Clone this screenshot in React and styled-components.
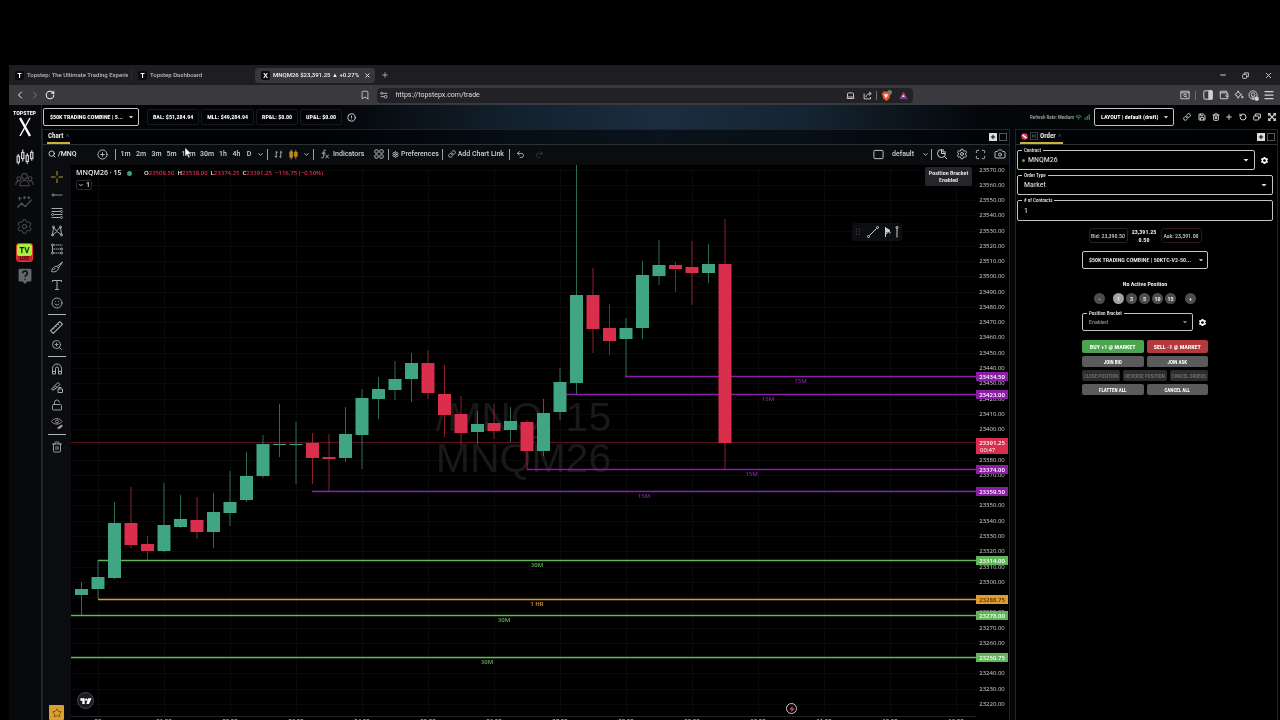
import React from 'react';
import styled, { createGlobalStyle } from 'styled-components';
import {
  Bookmark, Camera, ChevronDown, ChevronLeft, ChevronRight, CirclePlus,
  CircleAlert, Laptop, Link, LockOpen, Maximize,
  Menu, Minus, Plus, Redo2, RotateCcw, RotateCw, Save, Search, Settings,
  Smile, Star, Trash2, Undo2, Wallet, X, Zap, ZoomIn,
} from 'lucide-react';
import { MdSettings, MdWifi, MdSignalCellularAlt, MdArrowDropDown } from 'react-icons/md';

const UI = '"Open Sans", "Noto Sans", sans-serif';
const CHROME = 'Roboto, "Open Sans", sans-serif';
const NARROW = '"Roboto Condensed", "Liberation Sans Narrow", Roboto, sans-serif';

const GlobalStyle = createGlobalStyle`
  * { box-sizing: border-box; }
  html, body { margin: 0; background: #000; }
  body { overflow: hidden; color: #e8e8e8; font: 600 7px/10px ${UI}; }
  button, select, input {
    font: inherit;
    color: inherit;
    margin: 0;
    padding: 0;
    border: 0;
    background: none;
  }
  svg { display: block; flex: none; }
  a { color: inherit; text-decoration: none; }
`;

const Page = styled.div`
  height: 100vh;
  padding: 65px 0 0 9px;
  display: flex;
  flex-direction: column;
  will-change: transform;
`;

const TabStrip = styled.div`
  flex: none;
  height: 20px;
  display: flex;
  align-items: center;
  background: #1e1d21;
`;

const BrowserTab = styled.button`
  width: ${p => p.$w}px;
  height: 15px;
  padding: 0 3px 0 6px;
  display: flex;
  align-items: center;
  gap: 3px;
  text-align: left;
  white-space: nowrap;
  font: 500 6px/10px ${CHROME};
  color: ${p => (p.$active ? '#f2f2f2' : '#b9b9bc')};
  background: ${p => (p.$active ? '#38373b' : 'transparent')};
  border-radius: 4px;
  border-right: 1px solid ${p => (p.$line ? '#2c2b30' : 'transparent')};

  span {
    flex: 1;
    overflow: hidden;
  }
`;

const Favicon = styled.i`
  width: 9px;
  height: 9px;
  border-radius: 2px;
  background: #0b0b0d;
  color: #fff;
  font: 700 7px/9px ${UI};
  text-align: center;
`;

const Spacer = styled.div`
  flex: ${p => (p.$w ? `0 0 ${p.$w}px` : 1)};
`;

const Slot = styled.button`
  flex: none;
  width: ${p => p.$w || 18}px;
  height: ${p => p.$h || 18}px;
  display: flex;
  align-items: center;
  justify-content: center;
  white-space: nowrap;
  color: ${p => p.$c || '#d0d0d2'};
`;

const NavBar = styled.div`
  flex: none;
  height: 20px;
  display: grid;
  grid-template-columns: 1fr minmax(200px, 536px) 1fr;
  align-items: center;
  background: #3a393e;
`;

const NavGroup = styled.div`
  display: flex;
  align-items: center;
  justify-content: ${p => (p.$end ? 'flex-end' : 'flex-start')};
  padding: 0 ${p => (p.$end ? 0 : 3)}px;
`;

const UrlBar = styled.div`
  height: 15px;
  display: flex;
  align-items: center;
  padding: 0 2px 0 0;
  border-radius: 4px;
  background: #222126;
`;

const UrlInput = styled.input`
  flex: 1;
  min-width: 0;
  height: 12px;
  padding-left: 4px;
  font: 400 7px/12px ${CHROME};
  color: #dcdcde;
  outline: none;
`;

const Tick = styled.i`
  flex: none;
  width: 1px;
  height: 9px;
  background: #6b6b70;
`;

const AppShell = styled.div`
  flex: 1;
  min-height: 0;
  display: flex;
`;

const Sidebar = styled.nav`
  flex: none;
  width: 33px;
  padding: 4px 1px 0 0;
  border-right: 1px solid #24262a;
  background: #08090c;
  display: flex;
  flex-direction: column;
  align-items: center;
`;

const Brand = styled.div`
  height: 36px;
  display: flex;
  flex-direction: column;
  align-items: center;
  font: 700 6px/8px ${NARROW};
  color: #fff;
`;

const TvLive = styled.span`
  width: 17px;
  height: 19px;
  border: 1px solid #e0382c;
  border-radius: 3px;
  background: #c7202a;
  text-align: center;
  font: 700 5px/5px ${NARROW};
  color: #48080c;

  b {
    display: block;
    border-radius: 2px;
    background: #a9f03c;
    color: #102008;
    font: 700 8px/12px ${UI};
  }
`;

const Main = styled.main`
  flex: 1;
  min-width: 0;
  display: flex;
  flex-direction: column;
  padding-right: 2px;
  background: linear-gradient(90deg, #020304 22%, #13212e 38%, #1b2d40 50%, #152431 62%, #04070a 76%, #000 100%);
`;

const Header = styled.header`
  flex: none;
  height: 24px;
  padding-left: 1px;
  display: flex;
  align-items: center;
  color: #fff;
  font: 700 6px/10px ${NARROW};
`;

const Box = styled.label`
  position: relative;
  flex: ${p => (p.$fill ? 1 : 'none')};
  width: ${p => (p.$w ? `${p.$w}px` : 'auto')};
  height: ${p => p.$h || 18}px;
  display: flex;
  align-items: center;
  border: 1px solid #c4c4c4;
  border-radius: 2px;
  background: #000;
  font-weight: ${p => (p.$strong ? 600 : 'inherit')};

  select, input {
    flex: 1;
    min-width: 0;
    height: 100%;
    padding-left: ${p => p.$pad || 6}px;
    appearance: none;
    outline: none;
  }
`;

const BoxLabel = styled.span`
  position: absolute;
  top: -4px;
  left: 4px;
  padding: 0 2px;
  background: #000;
  color: #dedede;
  font: 600 5px/6px ${NARROW};
`;

const Stat = styled.div`
  height: 16px;
  padding: 2px 5px;
  margin-right: 2px;
  border: 1px solid #17191c;
  border-radius: 2px;
  white-space: nowrap;
`;

const Rate = styled.span`
  color: #98b09c;
  font: 500 5px/8px ${NARROW};
  white-space: nowrap;
`;

const Panels = styled.div`
  flex: 1;
  min-height: 0;
  display: flex;
  gap: 5px;
`;

const Panel = styled.section`
  flex: ${p => (p.$w ? 'none' : 1)};
  width: ${p => (p.$w ? `${p.$w}px` : 'auto')};
  min-width: 0;
  display: flex;
  flex-direction: column;
  border: 1px solid #202326;
  border-bottom: 0;
`;

const PanelTabs = styled.div`
  flex: none;
  height: 15px;
  display: flex;
  align-items: center;
  border-bottom: 1px solid #2d3233;
  background: rgba(0, 2, 5, 0.62);
`;

const PanelTab = styled.div`
  align-self: stretch;
  display: flex;
  align-items: center;
  gap: 2px;
  padding: 0 1px;
  margin-left: 4px;
  border-bottom: 2px solid #c9b43a;
  font: 700 7px/10px ${NARROW};

  i {
    color: #4a4d50;
    font: 400 7px/10px ${UI};
  }
`;

const Square = styled.button`
  width: 8px;
  height: 8px;
  margin-right: 2px;
  border: 1px solid ${p => (p.$on ? '#ddd' : '#55585a')};
  background: ${p => (p.$on ? '#ddd' : 'transparent')};
  color: #000;
`;

const ChartBar = styled.div`
  flex: none;
  height: 20px;
  padding-bottom: 2px;
  display: flex;
  align-items: center;
  background: #0b0c10;
  font: 500 7px/10px ${CHROME};
`;

const Symbol = styled.label`
  display: flex;
  align-items: center;
  gap: 2px;
  width: 51px;
  padding-left: 5px;

  input {
    width: 30px;
    outline: none;
  }
`;

const Bar = styled.i`
  flex: none;
  width: 1px;
  height: 11px;
  background: #9c9da0;
`;

const ChartBody = styled.div`
  flex: 1;
  min-height: 0;
  display: flex;
`;

const Tools = styled.div`
  flex: none;
  width: 28px;
  display: flex;
  flex-direction: column;
  align-items: center;
  padding: 3px 1px 0 0;
  background: #0b0c10;

  hr {
    width: 18px;
    height: 1px;
    margin: 2px 0 3px;
    border: 0;
    background: #b4b5b8;
  }
`;

const Favorite = styled.button`
  flex: none;
  width: 15px;
  height: 15px;
  display: grid;
  place-items: center;
  border-radius: 1px;
  background: #d9a133;
  color: #6e4a08;
`;

const Plot = styled.div`
  position: relative;
  flex: 1;
  min-width: 0;
  background: #000;
  overflow: hidden;

  > svg {
    width: 100%;
    height: 100%;
  }
`;

const Legend = styled.div`
  position: absolute;
  top: 3px;
  left: 5px;
  display: flex;
  align-items: center;
  white-space: nowrap;
  font-weight: 600;

  b {
    width: 51px;
    font-weight: 600;
  }

  span {
    color: #e0304f;
    font: 600 6px/10px ${UI};
    margin-right: 3px;
  }

  em {
    color: #f0f0f0;
    font-style: normal;
  }
`;

const Dot = styled.i`
  width: ${p => p.$size || 4}px;
  height: ${p => p.$size || 4}px;
  margin-right: ${p => p.$gap || 0}px;
  border-radius: 50%;
  background: ${p => p.$c || '#35a37c'};
`;

const Collapse = styled.button`
  position: absolute;
  top: 15px;
  left: 5px;
  width: 16px;
  height: 10px;
  display: flex;
  align-items: center;
  justify-content: center;
  gap: 2px;
  border: 1px solid #2a2b2f;
  border-radius: 2px;
`;

const Bracket = styled.div`
  position: absolute;
  top: 2px;
  right: 4px;
  width: 47px;
  height: 19px;
  padding-top: 2px;
  border-radius: 2px;
  background: #24262a;
  text-align: center;
  font: 600 6px/7px ${NARROW};
`;

const DrawPalette = styled.div`
  position: absolute;
  top: 58px;
  right: 74px;
  width: 50px;
  height: 18px;
  display: flex;
  align-items: center;
  border-radius: 3px;
  background: #0d0e12;
`;

const TvMark = styled.a`
  position: absolute;
  bottom: 11px;
  left: 6px;
  width: 17px;
  height: 17px;
  display: grid;
  place-items: center;
  border: 1px solid #43454c;
  border-radius: 50%;
  background: #1b1c22;
`;

const Bolt = styled.button`
  position: absolute;
  bottom: 6px;
  right: 179px;
  width: 11px;
  height: 11px;
  display: grid;
  place-items: center;
  border: 1px solid #d0c8ca;
  border-radius: 50%;
`;

const Axis = styled.svg`
  width: 33px;
  height: 100%;
  background: #000;
`;

const OrderBody = styled.div`
  flex: 1;
  display: flex;
  flex-direction: column;
  align-items: center;
  padding: 5px 4px 0 1px;
  background: #000;
  font: 400 6px/10px ${NARROW};
`;

const FieldRow = styled.div`
  align-self: stretch;
  display: flex;
  align-items: center;
  margin-bottom: 5px;
  font-size: 8px;
`;

const Quote = styled.div`
  width: ${p => p.$w}px;
  height: 15px;
  border: 1px solid ${p => p.$c};
  border-radius: 3px;
  text-align: center;
  line-height: 13px;
  white-space: nowrap;
`;

const Quotes = styled.div`
  height: 15px;
  display: flex;
  align-items: center;
  gap: 2px;
  margin: 2px 0 8px;

  strong {
    width: 29px;
    text-align: center;
    line-height: 8px;
  }
`;

const Ticket = styled.div`
  width: 126px;
  display: flex;
  flex-direction: column;

  p {
    margin: 10px 0 4px;
    text-align: center;
    font-weight: 700;
  }
`;

const Sizes = styled.div`
  display: flex;
  justify-content: center;
  gap: 2px;
  margin-bottom: 9px;
`;

const Size = styled.button`
  width: 11px;
  height: 11px;
  border-radius: 50%;
  background: ${p => (p.$on ? '#a3a3a3' : '#4d4d4d')};
  font-weight: 700;
  margin: 0 ${p => (p.$right ? 6 : 0)}px 0 ${p => (p.$left ? 7 : 0)}px;
`;

const Protection = styled.div`
  display: flex;
  gap: 3px;
  margin-bottom: 9px;
  color: #a4a4a4;
`;

const Actions = styled.div`
  display: flex;
  gap: 3px;
  margin-bottom: 3px;
`;

const Action = styled.button`
  flex: 1 1 ${p => (p.disabled ? 'auto' : 0)};
  height: ${p => (p.$main ? 13 : 11)}px;
  border-radius: 2px;
  background: ${p => p.$main || (p.disabled ? '#2d2d2d' : '#5b5b5b')};
  color: ${p => (p.disabled ? '#6c6c6c' : '#fff')};
  font-size: ${p => (p.$main ? 6 : 5)}px;
  font-weight: 700;
  white-space: nowrap;
`;

const Pointer = styled.svg`
  position: absolute;
  top: 147px;
  left: 184px;
`;

const TOP = 165;
const UP = '#3fa583';
const DOWN = '#d92f4c';
const PURPLE = '#8a1fa6';
const GREEN = '#62b558';
const ORANGE = '#e09a30';

// body top, body bottom, high, low, rising
const candles = [
  [589, 595, 582, 615, 1], [577, 589, 560, 599, 1], [523, 578, 502, 579, 1],
  [523, 545, 487, 548, 0], [544, 551, 536, 560, 0], [525, 551, 483, 552, 1],
  [519, 527, 495, 528, 1], [520, 532, 497, 539, 0], [512, 532, 493, 548, 1],
  [502, 513, 471, 526, 1], [476, 500, 452, 502, 1], [444, 476, 435, 478, 1],
  [444, 445, 404, 457, 1], [444, 445, 422, 484, 1], [443, 458, 433, 484, 0],
  [457, 459, 434, 491, 0], [434, 458, 407, 462, 1], [398, 435, 389, 469, 1],
  [389, 399, 377, 419, 1], [379, 390, 361, 400, 1], [363, 379, 353, 402, 1],
  [363, 393, 350, 399, 0], [394, 415, 365, 437, 0], [414, 433, 396, 445, 0],
  [424, 432, 411, 444, 1], [423, 431, 404, 439, 0], [421, 430, 407, 442, 1],
  [422, 451, 420, 470, 0], [413, 451, 399, 456, 1], [382, 412, 368, 420, 1],
  [295, 383, 165, 394, 1], [295, 329, 268, 353, 0], [328, 341, 304, 355, 0],
  [328, 339, 318, 376, 1], [275, 328, 261, 339, 1], [265, 276, 240, 285, 1],
  [265, 269, 262, 292, 0], [267, 273, 241, 305, 0], [264, 273, 244, 283, 1],
  [264, 443, 219, 469, 0],
];

// price, first x, colour, caption
const levels = [
  [23434.5, 554, PURPLE, '15M'],
  [23423, 489, PURPLE, '15M'],
  [23374, 456, PURPLE, '15M'],
  [23359.5, 241, PURPLE, '15M'],
  [23314, 27, GREEN, '30M'],
  [23288.75, 27, ORANGE, '1 HR'],
  [23278, -39, GREEN, '30M'],
  [23250.75, -73, GREEN, '30M'],
];

const hours = ['29', '01:00', '02:00', '03:00', '04:00', '05:00', '06:00', '07:00', '08:00', '09:00', '10:00', '11:00', '12:00', '13:00'];
const ticks = Array.from({ length: 36 }, (_, i) => 23570 - i * 10);
const yOf = price => Math.floor(170 + (23570 - price) * 1.527) - TOP;
const xOf = i => 10.5 + i * 16.5;

const Glyph = ({ size = 12, w = 1.6, children, ...rest }) => (
  <svg width={size} height={size} viewBox="0 0 24 24" fill="none" stroke="currentColor" strokeWidth={w} {...rest}>
    {children}
  </svg>
);

const tools = [
  ['Cross', <Glyph key="i" w={2}><path d="M12 0v9M12 15v9M0 12h9M15 12h9" /></Glyph>, '#c09a2c'],
  ['Trend line', <Glyph key="i"><circle cx="4" cy="12" r="2" /><path d="M6 12h17" /></Glyph>],
  ['Fib', <Glyph key="i" w={2}><path d="M1 3h22M1 9h18M5 15h18M1 21h18" /><circle cx="21" cy="9" r="2" /><circle cx="3" cy="15" r="2" /><circle cx="21" cy="21" r="2" /></Glyph>],
  ['Pattern', <Glyph key="i" w={2}><path d="M3 20L5 4l6 8 8-8 2 16-9-7-9 7" /><circle cx="5" cy="4" r="2" /><circle cx="19" cy="4" r="2" /><circle cx="3" cy="20" r="2" /><circle cx="21" cy="20" r="2" /></Glyph>],
  ['Forecast', <Glyph key="i" w={2}><path d="M5 4h18M5 12h14M5 20h14" strokeDasharray="3 1" /><path d="M3 6v12" /><circle cx="3" cy="4" r="2" /><circle cx="3" cy="20" r="2" /><circle cx="21" cy="12" r="2" /><circle cx="21" cy="20" r="2" /></Glyph>],
  ['Brush', <Glyph key="i" w={2}><path d="M23 2L12 11l3 3zM12 11c-5-1-9 2-11 10 6 2 13 0 14-7M5 17l4-2" /></Glyph>],
  ['Text', <Glyph key="i" w={2}><path d="M3 6V3h18v3M12 3v18M8 21h8" /></Glyph>],
  ['Emoji', <Smile key="i" size={12} strokeWidth={1.8} />],
  null,
  ['Measure', <Glyph key="i" size={13} w={2}><path d="M1 18L18 1l5 5L6 23zM6 13l2 2M10 9l2 2M14 5l2 2" /></Glyph>],
  ['Zoom', <ZoomIn key="i" size={12} strokeWidth={1.8} />],
  null,
  ['Magnet', <Glyph key="i" w={2}><path d="M3 22V11a9 9 0 0118 0v11h-6V11a3 3 0 00-6 0v11zM3 17h6M15 17h6" /></Glyph>],
  ['Keep drawing', <Glyph key="i" w={2}><path d="M2 15L14 3l4 4L7 17l-5 1zM5 12l4 4M8 9l4 4M14 16h9v7h-9zM16 16v-3h5" /></Glyph>],
  ['Lock', <LockOpen key="i" size={12} strokeWidth={1.8} />],
  ['Hide', <Glyph key="i"><path d="M1 9c5-8 16-8 21 0-5 7-16 7-21 0z" /><circle cx="12" cy="9" r="3" /><path d="M13 22l8-6 2 2-6 5z" fill="currentColor" /></Glyph>],
  null,
  ['Remove', <Trash2 key="i" size={12} strokeWidth={1.8} />],
];

const intervals = [['1m', 15], ['2m', 16], ['3m', 15], ['5m', 15], ['15m', 19], ['30m', 18], ['1h', 14], ['4h', 13], ['D', 12]];

function Browser() {
  return (
    <>
      <TabStrip>
        <BrowserTab $w={123} $line><Favicon>T</Favicon><span>Topstep: The Ultimate Trading Experience</span></BrowserTab>
        <BrowserTab $w={123}><Favicon>T</Favicon><span>Topstep Dashboard</span></BrowserTab>
        <BrowserTab $w={120} $active><Favicon>X</Favicon><span>MNQM26 $23,391.25 ▲ +0.27%</span><X size={7} strokeWidth={3} /></BrowserTab>
        <Slot $w={20} aria-label="New tab"><Plus size={8} /></Slot>
        <Spacer />
        <Slot $w={23} aria-label="Minimize"><Minus size={8} strokeWidth={3} /></Slot>
        <Slot $w={23} aria-label="Restore"><Glyph size={7} w={3}><rect x="2" y="8" width="14" height="14" rx="3" /><path d="M8 8V3h14v13h-6" /></Glyph></Slot>
        <Slot $w={23} aria-label="Close"><X size={9} strokeWidth={2.5} /></Slot>
      </TabStrip>
      <NavBar>
        <NavGroup>
          <Slot $w={15} $c="#eee" aria-label="Back"><ChevronLeft size={12} /></Slot>
          <Slot $w={15} $c="#77767b" aria-label="Forward"><ChevronRight size={12} /></Slot>
          <Slot $w={15} $c="#eee" aria-label="Reload"><RotateCw size={10} strokeWidth={2.5} /></Slot>
          <Spacer />
          <Slot aria-label="Bookmark"><Bookmark size={10} /></Slot>
        </NavGroup>
        <UrlBar>
          <Slot $w={15} aria-label="Site settings">
            <Glyph size={8} w={2.5}><path d="M8 7h14M2 17h10" /><circle cx="5" cy="7" r="3" /><circle cx="17" cy="17" r="4" /></Glyph>
          </Slot>
          <UrlInput aria-label="Address" defaultValue="https://topstepx.com/trade" />
          <Slot $w={16} aria-label="Install"><Laptop size={9} strokeWidth={2.5} /></Slot>
          <Slot $w={17} aria-label="Share"><Glyph size={9} w={2.5}><path d="M3 7v14h17v-5M8 16c0-6 5-9 13-9M16 2l6 5-6 5" /></Glyph></Slot>
          <Tick />
          <Slot $w={19} aria-label="Shields">
            <svg width="11" height="11" viewBox="0 0 24 24">
              <path d="M5 3h12l4 5-3 11-6 5-7-5L2 8z" fill="#e8572c" />
              <path d="M7 8l4 2 4-2-1 5-3 5-3-5z" fill="#fff" />
              <circle cx="19" cy="5" r="5" fill="#77777c" />
            </svg>
          </Slot>
          <Slot $w={15} aria-label="Rewards">
            <svg width="9" height="9" viewBox="0 0 24 24">
              <path d="M12 1L1 22l11-6z" fill="#e0475b" />
              <path d="M12 1l11 21-11-6z" fill="#9b3fb0" />
              <path d="M1 22l11-6 11 6z" fill="#5b3fc0" />
              <path d="M12 10l3 6H9z" fill="#fff" />
            </svg>
          </Slot>
        </UrlBar>
        <NavGroup $end>
          <Slot $w={20} aria-label="Search page"><Glyph size={10} w={2.2}><path d="M2 3h20v18H2zM2 7h20" /><circle cx="12" cy="13" r="3" /><path d="M14 15l4 4" /></Glyph></Slot>
          <Tick />
          <Slot $w={24} aria-label="Side panel"><Glyph size={10} w={2.4}><rect x="2" y="2" width="20" height="20" rx="2" /><path d="M14 2h8v20h-8z" fill="currentColor" /></Glyph></Slot>
          <Slot $w={7} aria-label="Wallet"><Wallet size={10} strokeWidth={2.4} /></Slot>
          <Slot $w={23} aria-label="Leo"><Glyph size={10} w={2.4}><path d="M10 2l3 6 6 3-6 3-3 6-3-6-5-3 5-3zM17 17h6M20 14v6" /></Glyph></Slot>
          <Slot $w={7} aria-label="Profile"><Glyph size={11} w={2}><circle cx="11" cy="11" r="9" /><circle cx="11" cy="10" r="4" /><path d="M8 14l3 6 3-6" /><circle cx="19" cy="19" r="4" fill="currentColor" /></Glyph></Slot>
          <Slot $w={23} aria-label="Menu"><Menu size={12} strokeWidth={2.5} /></Slot>
        </NavGroup>
      </NavBar>
    </>
  );
}

function SideNav() {
  return (
    <Sidebar>
      <Brand>
        TOPSTEP
        <svg width="14" height="20" viewBox="0 0 14 20" fill="none" stroke="#fff">
          <path d="M2 1l10 18" strokeWidth="2.4" />
          <path d="M12 1L2 19" strokeWidth="1.4" />
        </svg>
      </Brand>
      <Slot $h={24} aria-label="Trade">
        <Glyph size={18} w={1.6}><path d="M3 8v14M9 2v16M15 7v14M21 3v14" /><g fill="#08090c"><rect x="1.5" y="11" width="3" height="8" /><rect x="7.5" y="6" width="3" height="8" /><rect x="13.5" y="10" width="3" height="8" /><rect x="19.5" y="6" width="3" height="8" /></g></Glyph>
      </Slot>
      <Slot $h={20} $c="#4c4d50" aria-label="Community">
        <Glyph size={19} w={1.3}><circle cx="12" cy="8" r="3.5" /><circle cx="5" cy="11" r="2.5" /><circle cx="19" cy="11" r="2.5" /><path d="M6 20c0-9 12-9 12 0zM1 19c0-5 3-6 5-5M23 19c0-5-3-6-5-5" /></Glyph>
      </Slot>
      <Slot $h={26} $c="#55565a" aria-label="Stats">
        <Glyph size={17} w={1.7}><path d="M2 19l6-6 5 5 9-10M5 4v5M3 6h5M12 3v4M10 5h4M18 3v4M16 5h4" /></Glyph>
      </Slot>
      <Slot $h={22} $c="#55565a" aria-label="Settings"><Settings size={17} strokeWidth={1.4} /></Slot>
      <Slot $h={30} aria-label="TV live"><TvLive><b>TV</b>LIVE</TvLive></Slot>
      <Slot $h={18} $c="#65666a" aria-label="Help">
        <svg width="14" height="16" viewBox="0 0 24 27">
          <path d="M3 1h18a2 2 0 012 2v18a2 2 0 01-2 2h-5l-4 4-4-4H3a2 2 0 01-2-2V3a2 2 0 012-2z" fill="currentColor" />
          <path d="M8 9c0-6 8-5 8 0 0 3-4 3-4 6M12 18v2" fill="none" stroke="#08090c" strokeWidth="2.5" />
        </svg>
      </Slot>
    </Sidebar>
  );
}

function TopBar() {
  return (
    <Header>
      <Box $w={96}>
        <select aria-label="Account"><option>$50K TRADING COMBINE | 5...</option></select>
        <MdArrowDropDown size={10} />
        <Spacer $w={2} />
      </Box>
      <Spacer $w={8} />
      <Stat>BAL: $51,284.94</Stat>
      <Stat>MLL: $49,284.94</Stat>
      <Stat>RP&amp;L: $0.00</Stat>
      <Stat>UP&amp;L: $0.00</Stat>
      <Slot $w={14} aria-label="Info"><CircleAlert size={9} strokeWidth={2.5} /></Slot>
      <Spacer />
      <Rate>Refresh Rate: Medium</Rate>
      <Slot $w={8} $c="#3f9a4c" aria-label="Connection"><MdWifi size={7} /></Slot>
      <Slot $w={10} $c="#4fae5a" aria-label="Signal"><MdSignalCellularAlt size={8} /></Slot>
      <Spacer $w={2} />
      <Box $w={80}>
        <select aria-label="Layout"><option>LAYOUT | default (draft)</option></select>
        <MdArrowDropDown size={10} />
        <Spacer $w={2} />
      </Box>
      <Slot $w={26} aria-label="Share layout"><Link size={8} strokeWidth={3} /></Slot>
      <Slot $w={4} aria-label="Save"><Save size={8} strokeWidth={3} /></Slot>
      <Slot $w={23} aria-label="Delete"><Trash2 size={8} strokeWidth={3} /></Slot>
      <Slot $w={4} aria-label="Add"><Plus size={8} strokeWidth={3} /></Slot>
      <Slot $w={24} aria-label="Reset"><RotateCcw size={8} strokeWidth={3} /></Slot>
      <Slot $w={4} aria-label="Windows"><Glyph size={8} w={3}><rect x="2" y="9" width="15" height="12" rx="2" /><path d="M7 9V3h15v12h-5" /></Glyph></Slot>
      <Spacer $w={7} />
      <Slot $w={12} aria-label="Expand"><Glyph size={8} w={3.5}><path d="M2 8V2h6M16 2h6v6M22 16v6h-6M8 22H2v-6M3 3l18 18M21 3L3 21" /></Glyph></Slot>
    </Header>
  );
}

function ChartToolbar() {
  return (
    <ChartBar>
      <Symbol><Search size={8} strokeWidth={2.5} /><input aria-label="Symbol" defaultValue="/MNQ" /></Symbol>
      <Slot $w={17} aria-label="Compare"><CirclePlus size={11} strokeWidth={1.8} /></Slot>
      <Spacer $w={4} />
      <Bar />
      <Spacer $w={2} />
      {intervals.map(([name, w]) => <Slot key={name} $w={w}>{name}</Slot>)}
      <Slot $w={10} aria-label="More intervals"><ChevronDown size={7} strokeWidth={3} /></Slot>
      <Spacer $w={2} />
      <Bar />
      <Slot $w={20} aria-label="Bars"><Glyph size={9} w={2}><path d="M6 3v18M2 17h4M6 6h4M18 2v19M14 18h4M18 6h4" /></Glyph></Slot>
      <Slot $w={11} $c="#b98924" aria-label="Candles"><Glyph size={11} w={2}><path d="M7 1v22M17 2v20" /><path d="M4 6h6v12H4zM14 7h6v9h-6z" fill="currentColor" /></Glyph></Slot>
      <Slot $w={14} aria-label="Chart types"><ChevronDown size={7} strokeWidth={3} /></Slot>
      <Bar />
      <Slot $w={56}><Glyph size={10} w={2}><path d="M14 3c-4-2-5 1-5 4v10c0 3-2 5-6 4M4 10h9M13 14l8 8M21 14l-8 8" /></Glyph>&nbsp;&nbsp;Indicators</Slot>
      <Slot $w={18} aria-label="Templates"><Glyph size={10} w={2}><rect x="2" y="2" width="8" height="8" rx="2" /><rect x="14" y="2" width="8" height="8" rx="2" /><rect x="2" y="14" width="8" height="8" rx="2" /><rect x="14" y="14" width="8" height="8" rx="2" /></Glyph></Slot>
      <Bar />
      <Slot $w={53}><Settings size={7} strokeWidth={3} />&nbsp;Preferences</Slot>
      <Bar />
      <Slot $w={66}><Link size={8} strokeWidth={2.5} />&nbsp;Add Chart Link</Slot>
      <Bar />
      <Slot $w={20} aria-label="Undo"><Undo2 size={9} /></Slot>
      <Slot $c="#3c3d41" aria-label="Redo"><Redo2 size={9} /></Slot>
      <Spacer />
      <Slot aria-label="Layout"><Glyph size={11} w={2}><rect x="2" y="3" width="20" height="18" rx="2" /></Glyph></Slot>
      <Slot $w={32}>default</Slot>
      <Slot $w={12} aria-label="Layouts"><ChevronDown size={7} strokeWidth={3} /></Slot>
      <Bar />
      <Slot $w={20} aria-label="Quick search"><Glyph size={12} w={2}><path d="M11 3a8 8 0 108 8h-8zM14 2v6h6M17 17l5 5" /></Glyph></Slot>
      <Slot $w={19} aria-label="Chart settings"><Settings size={12} strokeWidth={1.8} /></Slot>
      <Slot $w={19} aria-label="Fullscreen"><Maximize size={11} strokeWidth={1.8} /></Slot>
      <Slot $w={19} aria-label="Snapshot"><Camera size={12} strokeWidth={1.8} /></Slot>
    </ChartBar>
  );
}

function PriceChart() {
  return (
    <ChartBody>
      <Tools>
        {tools.map((t, i) => (t
          ? <Slot key={i} $c={t[2] || '#a9aaad'} aria-label={t[0]}>{t[1]}</Slot>
          : <hr key={i} />))}
        <Spacer />
        <Favorite aria-label="Favorites"><Star size={10} /></Favorite>
      </Tools>
      <Plot>
        <svg fontFamily={UI} fontSize="7">
          <g stroke="#090b0b">
            {ticks.map(p => <line key={p} x1="0" x2="100%" y1={yOf(p) + 0.5} y2={yOf(p) + 0.5} />)}
            {hours.map((h, i) => <line key={h} x1={27.5 + 66 * i} x2={27.5 + 66 * i} y1="4" y2="551" />)}
          </g>
          <g fill="#191919" fontFamily="Liberation Sans, Arial, sans-serif" fontSize="41" fontWeight="400" textAnchor="middle">
            <text x="50%" y="266">/MNQ, 15</text>
            <text x="50%" y="307">MNQM26</text>
          </g>
          <line x1="0" x2="100%" y1="277.5" y2="277.5" stroke="#5c1724" />
          {levels.map(([price, x, color, name]) => (
            <g key={price}>
              <line x1={x} x2="100%" y1={yOf(price) + 0.5} y2={yOf(price) + 0.5} stroke={color} strokeWidth="1.6" />
              <text x="50%" dx={x / 2} y={yOf(price) + 7} fill={color} fontSize="6" textAnchor="middle">{name}</text>
            </g>
          ))}
          <g transform={`translate(0 ${-TOP})`}>
            {candles.map(([top, bottom, high, low, up], i) => (
              <g key={i} fill={up ? UP : DOWN}>
                <rect x={xOf(i) - 0.5} y={high} width="1" height={low - high} opacity="0.65" />
                <rect x={xOf(i) - 6.5} y={top} width="13" height={bottom - top} />
              </g>
            ))}
          </g>
          <line x1="0" x2="100%" y1="551.5" y2="551.5" stroke="#222427" />
          <g fill="#c4c4c6" fontSize="6" textAnchor="middle">
            {hours.map((h, i) => <text key={h} x={27 + 66 * i} y="558">{h}</text>)}
          </g>
        </svg>
        <Legend>
          <b>MNQM26 · 15</b>
          <Dot $size={5} $gap={12} />
          <span><em>O</em>23508.50</span>
          <span><em>H</em>23538.00</span>
          <span><em>L</em>23374.25</span>
          <span><em>C</em>23391.25</span>
          <span>−116.75 (−0.50%)</span>
        </Legend>
        <Collapse><ChevronDown size={6} strokeWidth={3} />1</Collapse>
        <Bracket>Position Bracket<br />Enabled</Bracket>
        <DrawPalette>
          <Slot $w={11} $c="#55565a" aria-label="Drag"><Glyph size={8} w={3}><path d="M7 2v3M7 10v3M7 18v3M16 2v3M16 10v3M16 18v3" /></Glyph></Slot>
          <Slot $w={20} aria-label="Trend line"><Glyph size={12} w={2}><circle cx="3" cy="21" r="2" /><circle cx="21" cy="3" r="2" /><path d="M5 19L19 5" /></Glyph></Slot>
          <Slot $w={10} aria-label="Pitch"><Glyph size={12} w={2}><path d="M7 2v20M7 4l9 5-9 8M7 8l9 4v3" /><path d="M7 4l8 5-8 4z" fill="currentColor" /></Glyph></Slot>
          <Slot $w={8} aria-label="Ray"><Glyph size={12} w={2}><circle cx="12" cy="3" r="2" /><path d="M12 5v18" /></Glyph></Slot>
        </DrawPalette>
        <Bolt aria-label="Events"><Zap size={6} color="#d04a60" fill="#d04a60" /></Bolt>
        <TvMark href="#tv" aria-label="TradingView">
          <svg width="12" height="8" viewBox="0 0 36 24" fill="#fff"><path d="M1 4h13v17H7V11H1zM24 4h11l-8 17h-8z" /><circle cx="19" cy="8" r="3.5" /></svg>
        </TvMark>
      </Plot>
      <Axis fontFamily={UI} fontSize="6" textAnchor="middle">
        {ticks.map(p => <text key={p} x="16" y={yOf(p) + 2} fill="#d4d4d6" fontWeight="500">{p.toFixed(2)}</text>)}
        {levels.map(([price, , color]) => (
          <g key={price}>
            <rect y={yOf(price) - 4} width="32" height="9" fill={color} />
            <text x="16" y={yOf(price) + 3} fill={color === ORANGE ? '#4c3000' : '#fff'}>{price.toFixed(2)}</text>
          </g>
        ))}
        <rect y="273" width="32" height="16" fill={DOWN} />
        <text x="16" y="280" fill="#fff">23391.25</text>
        <text x="4" y="287" fill="#fff" textAnchor="start" fontWeight="500">00:47</text>
      </Axis>
    </ChartBody>
  );
}

function OrderPanel() {
  return (
    <Panel $w={263}>
      <PanelTabs>
        <PanelTab>
          <svg width="7" height="7" viewBox="0 0 24 24"><circle cx="12" cy="12" r="11" fill="#dc3c5c" /><path d="M5 6l14 12" stroke="#fff" strokeWidth="5" /></svg>
          <Glyph size={8} w={2} color="#6a6b6d"><rect x="1" y="1" width="22" height="22" rx="2" /><path d="M8 6v12M16 6v12M8 12h8" /></Glyph>
          Order <i>×</i>
        </PanelTab>
        <Spacer />
        <Square $on aria-label="Add panel"><Plus size={6} strokeWidth={4} /></Square>
        <Square aria-label="Maximize panel" />
      </PanelTabs>
      <OrderBody>
        <FieldRow>
          <Box $fill $h={20} $pad={3}>
            <BoxLabel>Contract</BoxLabel>
            <Spacer $w={4} />
            <Dot $size={3} $c="#5aa84a" />
            <select><option>MNQM26</option></select>
            <MdArrowDropDown size={12} />
            <Spacer $w={2} />
          </Box>
          <Slot $w={18} $c="#fff" aria-label="Contract settings"><MdSettings size={9} /></Slot>
        </FieldRow>
        <FieldRow>
          <Box $fill $h={20}>
            <BoxLabel>Order Type</BoxLabel>
            <select><option>Market</option></select>
            <MdArrowDropDown size={12} />
            <Spacer $w={2} />
          </Box>
        </FieldRow>
        <FieldRow>
          <Box $fill $h={21}>
            <BoxLabel># of Contracts</BoxLabel>
            <input defaultValue="1" />
          </Box>
        </FieldRow>
        <Quotes>
          <Quote $w={39} $c="#1c2a20">Bid: 23,390.50</Quote>
          <strong>23,391.25<br />0.50</strong>
          <Quote $w={41} $c="#351418">Ask: 23,391.00</Quote>
        </Quotes>
        <Ticket>
          <Box $strong>
            <select aria-label="Trading account"><option>$50K TRADING COMBINE | 50KTC-V2-50...</option></select>
            <MdArrowDropDown size={10} />
            <Spacer $w={1} />
          </Box>
          <p>No Active Position</p>
          <Sizes>
            <Size $right>-</Size>
            <Size $on>1</Size>
            <Size>3</Size>
            <Size>5</Size>
            <Size>10</Size>
            <Size>15</Size>
            <Size $left>+</Size>
          </Sizes>
          <Protection>
            <Box $fill>
              <BoxLabel>Position Bracket</BoxLabel>
              <select><option>Enabled</option></select>
              <MdArrowDropDown size={10} />
              <Spacer $w={2} />
            </Box>
            <Slot $w={12} $c="#fff" aria-label="Bracket settings"><MdSettings size={9} /></Slot>
          </Protection>
          <Actions>
            <Action $main="#4ba54e">BUY +1 @ MARKET</Action>
            <Action $main="#b23a3d">SELL -1 @ MARKET</Action>
          </Actions>
          <Actions><Action>JOIN BID</Action><Action>JOIN ASK</Action></Actions>
          <Actions>
            <Action disabled>CLOSE POSITION</Action>
            <Action disabled>REVERSE POSITION</Action>
            <Action disabled>CANCEL ORDERS</Action>
          </Actions>
          <Actions><Action>FLATTEN ALL</Action><Action>CANCEL ALL</Action></Actions>
        </Ticket>
      </OrderBody>
    </Panel>
  );
}

function App() {
  return (
    <>
      <GlobalStyle />
      <Page>
        <Browser />
        <AppShell>
          <SideNav />
          <Main>
            <TopBar />
            <Panels>
              <Panel>
                <PanelTabs>
                  <PanelTab>Chart <i>×</i></PanelTab>
                  <Spacer />
                  <Square $on aria-label="Add panel"><Plus size={6} strokeWidth={4} /></Square>
                  <Square aria-label="Maximize panel" />
                </PanelTabs>
                <ChartToolbar />
                <PriceChart />
              </Panel>
              <OrderPanel />
            </Panels>
          </Main>
        </AppShell>
      </Page>
      <Pointer width="8" height="12" viewBox="0 0 16 24">
        <path d="M2 1v18l4-4 3 7 3-1-3-7h6z" fill="#fff" stroke="#000" />
      </Pointer>
    </>
  );
}

export default App;
